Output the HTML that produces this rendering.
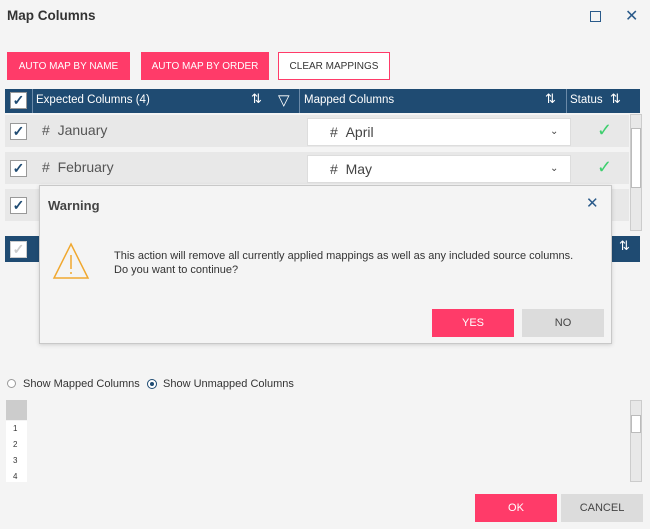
<!DOCTYPE html><html><head><style>
*{box-sizing:border-box;margin:0;padding:0}
body{width:650px;height:529px;background:#f4f4f4;font-family:"Liberation Sans",sans-serif;position:relative;overflow:hidden;color:#333}
.a{position:absolute}
.btn{position:absolute;display:flex;align-items:center;justify-content:center;font-size:10px;color:#fff;background:#ff3b69}
.hdr{background:#1f4b72;color:#fff;font-size:11.5px}
.cb{position:absolute;width:17px;height:17px;background:#fff;border:1px solid #999;color:#1f4b72;font-size:14px;line-height:15px;text-align:center;font-weight:bold}
.row{background:#e8e8e8}
.dd{position:absolute;background:#fff;border:1px solid #ddd;font-size:14px;color:#444}
</style></head><body>
<div class="a" style="left:7px;top:8px;font-size:13.5px;font-weight:bold;color:#333">Map Columns</div>
<div class="a" style="left:590px;top:11px;width:11px;height:11px;border:1.5px solid #2a5a8a"></div>
<div class="a" style="left:625px;top:6px;font-size:16px;color:#2a5a8a">✕</div>
<div class="btn" style="left:7px;top:52px;width:123px;height:28px">AUTO MAP BY NAME</div>
<div class="btn" style="left:141px;top:52px;width:128px;height:28px">AUTO MAP BY ORDER</div>
<div class="btn" style="left:278px;top:52px;width:112px;height:28px;background:#fff;border:1px solid #ff3b69;color:#333">CLEAR MAPPINGS</div>
<div class="a hdr" style="left:5px;top:89px;width:635px;height:24px"></div>
<div class="cb" style="left:10px;top:92px">✓</div>
<div class="a" style="left:32px;top:89px;width:1px;height:24px;background:#6b8aa8"></div>
<div class="a" style="left:299px;top:89px;width:1px;height:24px;background:#6b8aa8"></div>
<div class="a" style="left:566px;top:89px;width:1px;height:24px;background:#6b8aa8"></div>
<div class="a" style="left:36px;top:94px;color:#fff;font-size:11.5px">Expected Columns (4)</div>
<div class="a" style="left:251px;top:91px;color:#fff;font-size:13px">⇅</div>
<div class="a" style="left:278px;top:91px;color:#fff;font-size:15px">▽</div>
<div class="a" style="left:304px;top:94px;color:#fff;font-size:11.5px">Mapped Columns</div>
<div class="a" style="left:545px;top:91px;color:#fff;font-size:13px">⇅</div>
<div class="a" style="left:570px;top:94px;color:#fff;font-size:11.5px">Status</div>
<div class="a" style="left:610px;top:91px;color:#fff;font-size:13px">⇅</div>
<div class="a row" style="left:5px;top:115px;width:624px;height:32px"></div>
<div class="a row" style="left:5px;top:152px;width:624px;height:32px"></div>
<div class="a row" style="left:5px;top:189px;width:624px;height:32px"></div>
<div class="cb" style="left:10px;top:123px">✓</div>
<div class="cb" style="left:10px;top:160px">✓</div>
<div class="cb" style="left:10px;top:197px">✓</div>
<div class="a" style="left:42px;top:122px;font-size:14px;color:#555"># &nbsp;January</div>
<div class="a" style="left:42px;top:159px;font-size:14px;color:#555"># &nbsp;February</div>
<div class="dd" style="left:307px;top:118px;width:264px;height:28px"><span class="a" style="left:22px;top:5px"># &nbsp;April</span><span class="a" style="left:242px;top:7px;font-size:10px">⌄</span></div>
<div class="dd" style="left:307px;top:155px;width:264px;height:28px"><span class="a" style="left:22px;top:5px"># &nbsp;May</span><span class="a" style="left:242px;top:7px;font-size:10px">⌄</span></div>
<div class="a" style="left:597px;top:120px;color:#3ecf6e;font-size:18px;font-weight:300">✓</div>
<div class="a" style="left:597px;top:157px;color:#3ecf6e;font-size:18px">✓</div>
<div class="a" style="left:630px;top:114px;width:12px;height:117px;background:#e8e8e8;border:1px solid #ccc"></div>
<div class="a" style="left:631px;top:128px;width:10px;height:60px;background:#fff;border:1px solid #bbb"></div>
<div class="a hdr" style="left:5px;top:236px;width:635px;height:26px"></div>
<div class="cb" style="left:10px;top:241px;color:#ccc;border-color:#ccc">✓</div>
<div class="a" style="left:619px;top:238px;color:#fff;font-size:13px">⇅</div>
<div class="a" style="left:39px;top:185px;width:573px;height:159px;background:#f4f4f4;border:1px solid #c8c8c8;box-shadow:0 1px 4px rgba(0,0,0,.15)">
<div class="a" style="left:8px;top:12px;font-size:13px;font-weight:bold;color:#444">Warning</div>
<div class="a" style="left:546px;top:8px;font-size:15px;color:#2a5a8a">✕</div>
<svg class="a" style="left:12px;top:54px" width="38" height="44"><path d="M19 4 L36 38 L2 38 Z" fill="none" stroke="#f0a830" stroke-width="1.5"/><line x1="19" y1="15" x2="19" y2="29" stroke="#f0a830" stroke-width="1.5"/><circle cx="19" cy="33" r="1" fill="#f0a830"/></svg>
<div class="a" style="left:74px;top:63px;font-size:11px;line-height:14px;color:#333">This action will remove all currently applied mappings as well as any included source columns.<br>Do you want to continue?</div>
<div class="btn" style="left:392px;top:123px;width:82px;height:28px;font-size:11px">YES</div>
<div class="btn" style="left:482px;top:123px;width:82px;height:28px;font-size:11px;background:#dcdcdc;color:#444">NO</div>
</div>
<div class="a" style="left:7px;top:379px;width:9px;height:9px;border:1px solid #999;border-radius:50%;background:#fff"></div>
<div class="a" style="left:23px;top:378px;font-size:11px">Show Mapped Columns</div>
<div class="a" style="left:147px;top:379px;width:10px;height:10px;border:1px solid #1f4b72;border-radius:50%;background:#fff"><div style="margin:2px;width:4px;height:4px;border-radius:50%;background:#1f4b72"></div></div>
<div class="a" style="left:163px;top:378px;font-size:11px">Show Unmapped Columns</div>
<div class="a" style="left:6px;top:400px;width:21px;height:20px;background:#ccc"></div>
<div class="a" style="left:6px;top:421px;width:21px;height:61px;background:#fff;font-size:8px;line-height:16px;padding-left:7px">1<br>2<br>3<br>4</div>
<div class="a" style="left:630px;top:400px;width:12px;height:82px;background:#e8e8e8;border:1px solid #ccc"></div>
<div class="a" style="left:631px;top:415px;width:10px;height:18px;background:#fff;border:1px solid #bbb"></div>
<div class="btn" style="left:475px;top:494px;width:82px;height:28px;font-size:11px">OK</div>
<div class="btn" style="left:561px;top:494px;width:82px;height:28px;font-size:11px;background:#dcdcdc;color:#444">CANCEL</div>
</body></html>
